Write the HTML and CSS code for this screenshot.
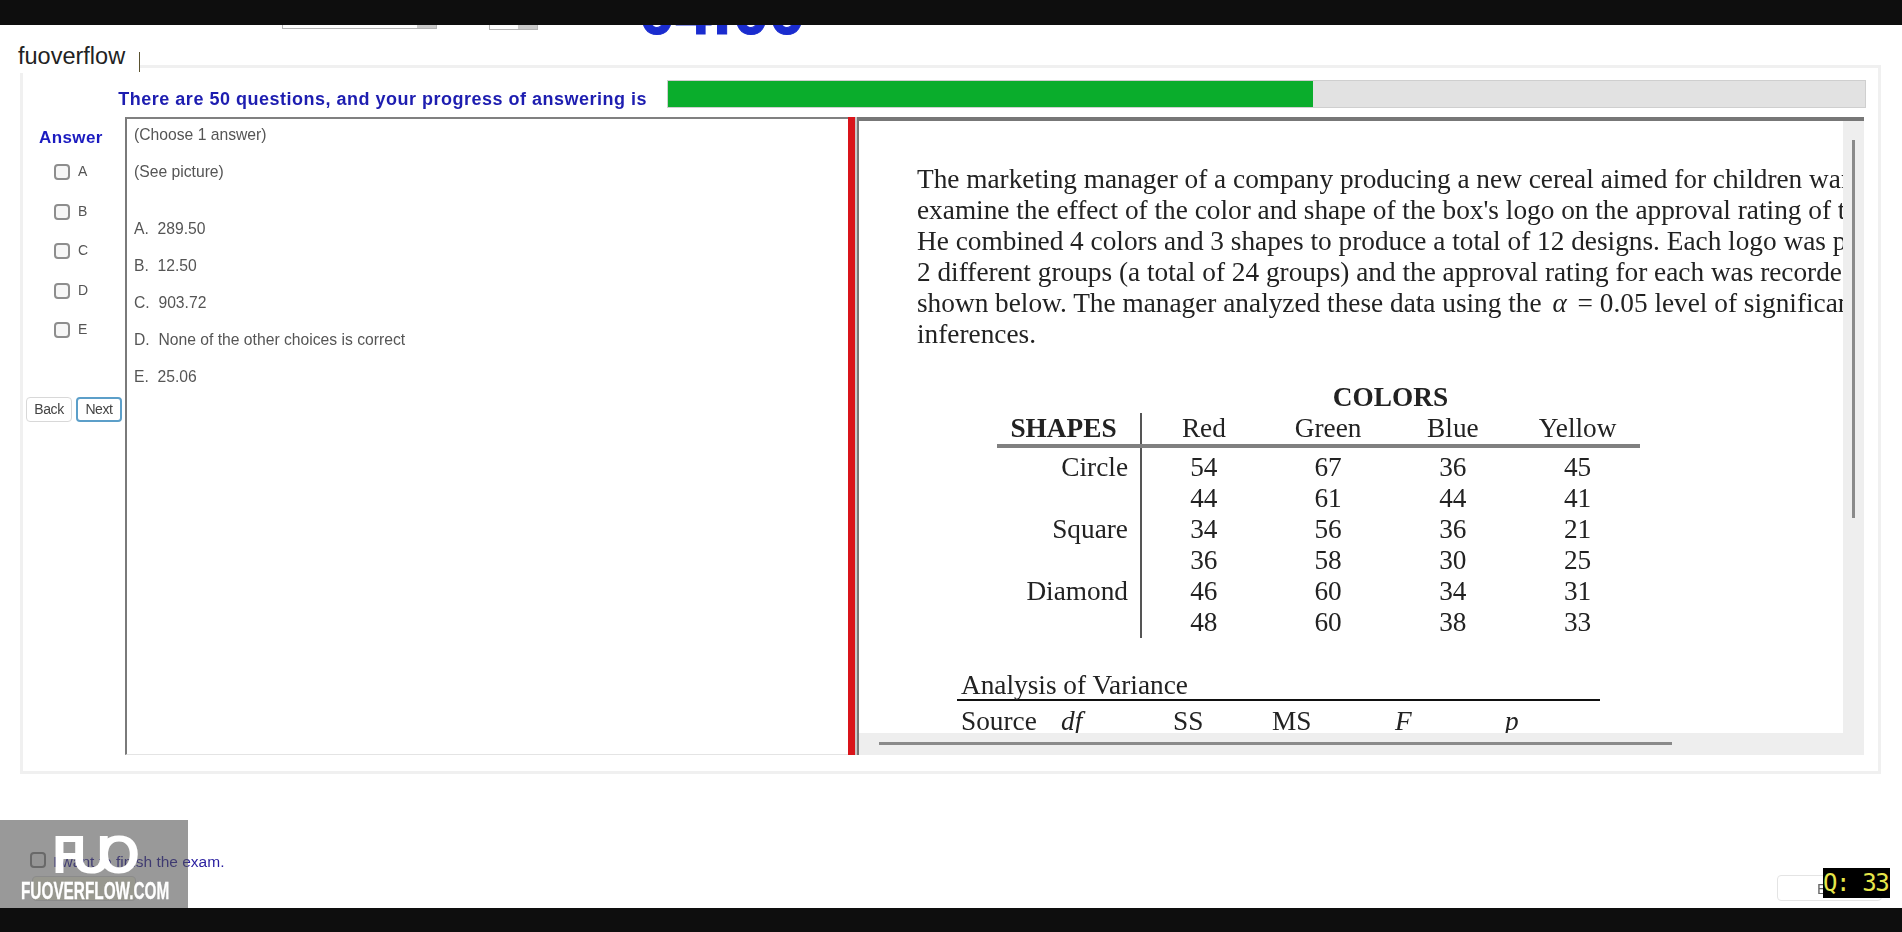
FILE: index.html
```html
<!DOCTYPE html>
<html>

	<head>
		<meta charset="UTF-8">
		<title>fuoverflow</title>
		<link rel="stylesheet" href="styles.css">
	</head>

	<body>
		<div class="page">
			<div class="blackBar topBar"></div>

			<div class="strip">
				<div class="selectEnd selectWide"><span class="selectArrow"></span></div>
				<div class="selectEnd selectSmall"><span class="selectArrow"></span></div>
				<div class="timer"><span class="timerText">04:00</span></div>
			</div>

			<div class="panel">
				<div class="progressRow">
					<div class="progressText">There are 50 questions, and your progress of answering is</div>
					<div class="progressBar">
						<div class="progressFill"></div>
					</div>
				</div>

				<div class="workRow">
					<div class="answerCol">
						<div class="answerTitle">Answer</div>
						<label class="answerItem"><input type="checkbox" class="check">A</label>
						<label class="answerItem"><input type="checkbox" class="check">B</label>
						<label class="answerItem"><input type="checkbox" class="check">C</label>
						<label class="answerItem"><input type="checkbox" class="check">D</label>
						<label class="answerItem"><input type="checkbox" class="check">E</label>
						<div class="navBtns">
							<button class="navBtn">Back</button>
							<button class="navBtn navBtnOn">Next</button>
						</div>
					</div>

					<div class="questionPane">
						<div>(Choose 1 answer)</div>
						<div>(See picture)</div>
						<div class="firstChoice">A.&nbsp; 289.50</div>
						<div>B.&nbsp; 12.50</div>
						<div>C.&nbsp; 903.72</div>
						<div>D.&nbsp; None of the other choices is correct</div>
						<div>E.&nbsp; 25.06</div>
					</div>

					<div class="splitter"></div>

					<div class="picturePane">
						<div class="pictureView">
							<p class="pictureText">The marketing manager of a company producing a new cereal aimed for children wants to<br>
							examine the effect of the color and shape of the box's logo on the approval rating of the<br>
							He combined 4 colors and 3 shapes to produce a total of 12 designs. Each logo was placed on<br>
							2 different groups (a total of 24 groups) and the approval rating for each was recorded as<br>
							shown below. The manager analyzed these data using the <i class="alpha">α</i> = 0.05 level of significance to make<br>
							inferences.</p>

							<table class="dataTable">
								<tr>
									<td class="headCell"></td>
									<th class="colorsHead" colspan="4">COLORS</th>
								</tr>
								<tr class="headRow">
									<th class="shapesHead">SHAPES</th>
									<td>Red</td>
									<td>Green</td>
									<td>Blue</td>
									<td>Yellow</td>
								</tr>
								<tr class="firstRow">
									<td class="shapeCell">Circle</td>
									<td>54</td>
									<td>67</td>
									<td>36</td>
									<td>45</td>
								</tr>
								<tr>
									<td class="shapeCell"></td>
									<td>44</td>
									<td>61</td>
									<td>44</td>
									<td>41</td>
								</tr>
								<tr>
									<td class="shapeCell">Square</td>
									<td>34</td>
									<td>56</td>
									<td>36</td>
									<td>21</td>
								</tr>
								<tr>
									<td class="shapeCell"></td>
									<td>36</td>
									<td>58</td>
									<td>30</td>
									<td>25</td>
								</tr>
								<tr>
									<td class="shapeCell">Diamond</td>
									<td>46</td>
									<td>60</td>
									<td>34</td>
									<td>31</td>
								</tr>
								<tr>
									<td class="shapeCell"></td>
									<td>48</td>
									<td>60</td>
									<td>38</td>
									<td>33</td>
								</tr>
							</table>

							<div class="anovaTitle">Analysis of Variance</div>
							<div class="anovaHead">
								<span>Source</span>
								<i>df</i>
								<span>SS</span>
								<span>MS</span>
								<i>F</i>
								<i>p</i>
							</div>
						</div>
						<div class="vScroll"><div class="vThumb"></div></div>
						<div class="hScroll"><div class="hThumb"></div></div>
					</div>
				</div>
			</div>

			<div class="footer">
				<div class="finishCol">
					<label class="finishItem"><input type="checkbox" class="check"><span class="finishText">I want to finish the exam.</span></label>
					<button class="finishBtn"></button>
				</div>
				<button class="exitBtn">Exit</button>
			</div>

			<div class="blackBar bottomBar"></div>

			<div class="siteLabel">fuoverflow<span class="caret"></span></div>
			<div class="qBadge">Q: 33</div>
			<div class="watermark">
				<div class="wmLogo">FUO</div>
				<div class="wmSite">FUOVERFLOW.COM</div>
			</div>
		</div>
	</body>

</html>
```

FILE: styles.css
```css
* {
	margin: 0px;
	padding: 0px;
	box-sizing: border-box;
}

body {
	margin: 0;
	background: #fff;
	overflow: hidden;
	font-family: "Liberation Sans", Arial, sans-serif;
}

.page {
	position: relative;
	width: 1902px;
	height: 932px;
	display: flex;
	flex-direction: column;
	overflow: hidden;
	filter: blur(0.4px);
}

.blackBar {
	background: #0e0e0e;
	flex: none;
}

.topBar {
	height: 25px;
}

.bottomBar {
	height: 24px;
}

/* bits of the exam header cut off by the video bar */
.strip {
	height: 40px;
	flex: none;
	display: flex;
	align-items: flex-start;
	padding-left: 282px;
}

.selectEnd {
	display: flex;
	justify-content: flex-end;
	border: 1px solid #b5b5b5;
	border-top: none;
}

.selectWide {
	width: 155px;
	height: 4px;
}

.selectSmall {
	width: 49px;
	height: 5px;
	margin-left: 52px;
}

.selectArrow {
	width: 19px;
	background: #c9c9c9;
}

.timer {
	width: 170px;
	height: 13px;
	margin-left: 101px;
	overflow: hidden;
	display: flex;
	align-items: flex-end;
}

.timerText {
	font-size: 65px;
	line-height: 64px;
	font-weight: bold;
	color: #1a2ccf;
	-webkit-text-stroke: 1px #1a2ccf;
	margin-bottom: -6px;
}

.panel {
	width: 1861px;
	height: 709px;
	margin-left: 20px;
	flex: none;
	border: 3px solid #f0f0f0;
	padding: 12px 12px 0 0;
}

.progressRow {
	display: flex;
	justify-content: flex-end;
	gap: 20px;
	height: 28px;
}

.progressText {
	padding-top: 9px;
	font-size: 18px;
	line-height: 21px;
	font-weight: bold;
	color: #1d1db0;
	letter-spacing: 0.5px;
}

.progressBar {
	width: 1199px;
	height: 28px;
	background: #e2e2e2;
	border: 1px solid #cfcfcf;
}

.progressFill {
	width: 645px;
	height: 100%;
	background: #0aad2c;
}

.workRow {
	display: flex;
	height: 638px;
	margin-top: 9px;
}

.answerCol {
	width: 102px;
	flex: none;
	display: flex;
	flex-direction: column;
	padding-top: 12px;
}

.answerTitle {
	font-size: 17px;
	line-height: 18px;
	font-weight: bold;
	color: #1b1bc0;
	letter-spacing: 0.4px;
	padding-left: 16px;
	margin-bottom: 17px;
}

.answerItem {
	display: flex;
	align-items: flex-start;
	gap: 8px;
	height: 39.5px;
	padding-left: 31px;
	font-size: 14px;
	line-height: 15px;
	color: #555;
}

.check {
	appearance: none;
	width: 16px;
	height: 16px;
	flex: none;
	background: #f6f6f6;
	border: 2px solid #8d8d8d;
	border-radius: 4px;
}

.navBtns {
	display: flex;
	gap: 4px;
	padding-left: 3px;
	margin-top: 35px;
}

.navBtn {
	width: 46px;
	height: 25px;
	background: #fff;
	border: 1px solid #d8d8d8;
	border-radius: 4px;
	font-family: "Liberation Sans", Arial, sans-serif;
	font-size: 14px;
	letter-spacing: -0.4px;
	color: #444;
}

.navBtnOn {
	border: 2px solid #5c9fc9;
}

.questionPane {
	width: 723px;
	flex: none;
	display: flex;
	flex-direction: column;
	gap: 17px;
	padding: 6px 0 0 7px;
	border-top: 2px solid #808080;
	border-left: 2px solid #7a7a7a;
	border-bottom: 1px solid #e4e4e4;
	font-size: 15.7px;
	line-height: 20px;
	color: #555;
}

.firstChoice {
	margin-top: 20px;
}

.splitter {
	width: 9px;
	flex: none;
	background: #d9141a;
	border-right: 2px solid #c8c8c8;
}

.picturePane {
	width: 1007px;
	flex: none;
	display: grid;
	grid-template-columns: 984px 21px;
	grid-template-rows: 612px 22px;
	border-top: 4px solid #777;
	border-left: 2px solid #777;
	background: #eeeeee;
}

.pictureView {
	background: #fff;
	overflow: hidden;
	padding: 43px 0 0 58px;
	font-family: "Liberation Serif", "Times New Roman", serif;
	font-size: 27.3px;
	line-height: 31px;
	color: #222;
	white-space: nowrap;
}

.alpha {
	margin: 0 4px;
}

.dataTable {
	margin: 32px 0 0 80px;
	border-collapse: collapse;
	table-layout: fixed;
	width: 643px;
}

.dataTable td, .dataTable th {
	height: 31px;
	padding: 0;
	text-align: center;
	font-weight: normal;
	line-height: 31px;
}

.dataTable td:nth-child(1), .dataTable th:nth-child(1) {
	width: 144px;
}

.dataTable td:nth-child(2) {
	width: 130px;
}

.dataTable td:nth-child(3) {
	width: 114px;
}

.dataTable td:nth-child(4) {
	width: 136px;
}

.dataTable td:nth-child(5) {
	width: 119px;
}

.dataTable .colorsHead {
	font-weight: bold;
	width: auto;
}

.dataTable .shapesHead {
	font-weight: bold;
	border-right: 2px solid #555;
	padding-right: 10px;
}

.dataTable .headRow td, .dataTable .headRow th {
	border-bottom: 4px solid #808080;
}

.dataTable .firstRow td {
	height: 35px;
	padding-top: 4px;
}

.dataTable .shapeCell {
	text-align: right;
	padding-right: 12px;
	border-right: 2px solid #555;
}

.anovaTitle {
	width: 643px;
	margin: 32px 0 0 40px;
	padding-left: 4px;
	border-bottom: 2px solid #111;
	height: 31px;
}

.anovaHead {
	display: grid;
	grid-template-columns: 100px 112px 99px 123px 110px 40px;
	margin: 5px 0 0 44px;
}

.vScroll {
	grid-row: 1 / span 2;
	grid-column: 2;
	display: flex;
	justify-content: center;
	padding-top: 19px;
}

.vThumb {
	width: 3px;
	height: 378px;
	background: #8a8a8a;
}

.hScroll {
	grid-row: 2;
	grid-column: 1;
	padding: 9px 0 0 20px;
}

.hThumb {
	width: 793px;
	height: 3px;
	background: #8a8a8a;
}

.footer {
	flex: 1;
	display: flex;
	justify-content: space-between;
	align-items: flex-end;
	padding: 0 20px 7px 30px;
}

.finishCol {
	display: flex;
	flex-direction: column;
	gap: 8px;
}

.finishItem {
	display: flex;
	align-items: center;
	gap: 7px;
	height: 16px;
	font-size: 15.5px;
	color: #2a1fa0;
}

.finishText {
	margin-top: 4px;
}

.finishBtn {
	width: 104px;
	height: 25px;
	margin-left: 2px;
	background: #fdfde6;
	border: 1px solid #ddd;
	border-radius: 4px;
}

.exitBtn {
	width: 105px;
	height: 26px;
	background: #fff;
	border: 1px solid #e4e4e4;
	border-radius: 4px;
	font-family: "Liberation Sans", Arial, sans-serif;
	font-size: 15px;
	color: #666;
}

/* overlays burned into the video */
.siteLabel {
	position: absolute;
	left: 0;
	top: 38px;
	width: 140px;
	height: 35px;
	padding: 6px 0 0 18px;
	background: #fff;
	font-size: 23.5px;
	line-height: 24px;
	color: #222;
}

.caret {
	position: absolute;
	left: 139px;
	top: 14px;
	width: 1px;
	height: 20px;
	background: #5a5230;
}

.qBadge {
	position: absolute;
	left: 1823px;
	top: 868px;
	width: 67px;
	height: 30px;
	background: #000;
	color: #e6e64a;
	font-family: "DejaVu Sans Mono", monospace;
	font-size: 24px;
	letter-spacing: -1.4px;
	line-height: 30px;
	white-space: nowrap;
}

.watermark {
	position: absolute;
	left: 0;
	top: 820px;
	width: 188px;
	height: 88px;
	background: rgba(80, 80, 80, 0.58);
	color: #fff;
	text-align: center;
}

.wmLogo {
	font-size: 54px;
	line-height: 54px;
	font-weight: bold;
	letter-spacing: -13px;
	margin-top: 7px;
	padding-right: 9px;
}

.wmSite {
	font-size: 23px;
	line-height: 24px;
	font-weight: bold;
	text-align: left;
	white-space: nowrap;
	-webkit-text-stroke: 0.3px #fff;
	transform-origin: left center;
	transform: scaleX(0.667);
	margin: -2px 0 0 21px;
}
```
